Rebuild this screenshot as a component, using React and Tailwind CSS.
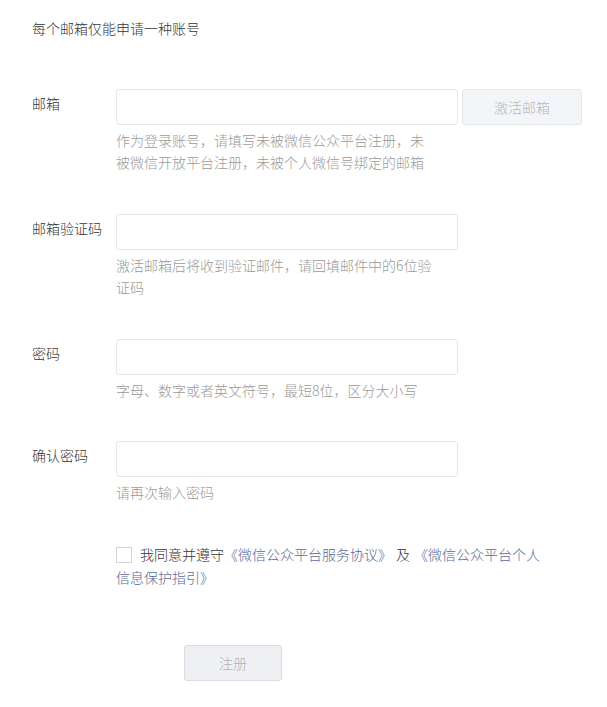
import { useState } from "react";

const font = {
    fontFamily:
        '"Noto Sans CJK SC", "Liberation Sans", sans-serif',
};

function Row({ label, hint, action, className = "" }) {
    return (
        <div className={`flex ${className}`}>
            <label className="w-[84px] shrink-0 pt-[3px] text-sm leading-[22px] text-[#353535]">
                {label}
            </label>
            <div>
                <div className="flex gap-1">
                    <input className="h-9 w-[342px] rounded-[3px] border border-[#e7e7eb] bg-white px-3 text-sm outline-none" />
                    {action && (
                        <button
                            type="button"
                            className="h-9 w-[120px] rounded-[3px] border border-[#e4e8eb] bg-[#f4f5f9] text-sm font-light text-[#b7b9bd]"
                        >
                            {action}
                        </button>
                    )}
                </div>
                <p className="mt-1 w-[320px] text-sm leading-[22px] text-[#9a9a9a]">
                    {hint}
                </p>
            </div>
        </div>
    );
}

export default function App() {
    const [agree, setAgree] = useState(false);

    return (
        <div
            className="min-h-screen bg-white px-8 pt-[17px] font-light"
            style={font}
        >
            <p className="text-sm leading-[22px] text-[#353535]">
                每个邮箱仅能申请一种账号
            </p>

            <div className="mt-[50px]">
                <Row
                    label="邮箱"
                    action="激活邮箱"
                    hint="作为登录账号，请填写未被微信公众平台注册，未被微信开放平台注册，未被个人微信号绑定的邮箱"
                />
                <Row
                    className="mt-[41px]"
                    label="邮箱验证码"
                    hint="激活邮箱后将收到验证邮件，请回填邮件中的6位验证码"
                />
                <Row
                    className="mt-[41px]"
                    label="密码"
                    hint="字母、数字或者英文符号，最短8位，区分大小写"
                />
                <Row
                    className="mt-10"
                    label="确认密码"
                    hint="请再次输入密码"
                />

                <p className="ml-[84px] mt-10 w-[430px] text-sm leading-[23px] text-[#353535]">
                    <span
                        onClick={() => setAgree(!agree)}
                        className={`mr-2 inline-block h-4 w-4 cursor-pointer align-[-3px] border ${
                            agree
                                ? "border-[#1aad19] bg-[#1aad19]"
                                : "border-[#d2d2d2] bg-white"
                        }`}
                    />
                    我同意并遵守
                    <a className="text-[#576b95]">《微信公众平台服务协议》</a>
                    <span className="mx-1">及</span>
                    <a className="text-[#576b95]">
                        《微信公众平台个人信息保护指引》
                    </a>
                </p>

                <button
                    type="button"
                    className="ml-[152px] mt-14 h-9 w-[98px] rounded-[3px] border border-[#dcdde0] bg-[#eff0f3] text-sm text-[#b2b2b2]"
                >
                    注册
                </button>
            </div>
        </div>
    );
}
